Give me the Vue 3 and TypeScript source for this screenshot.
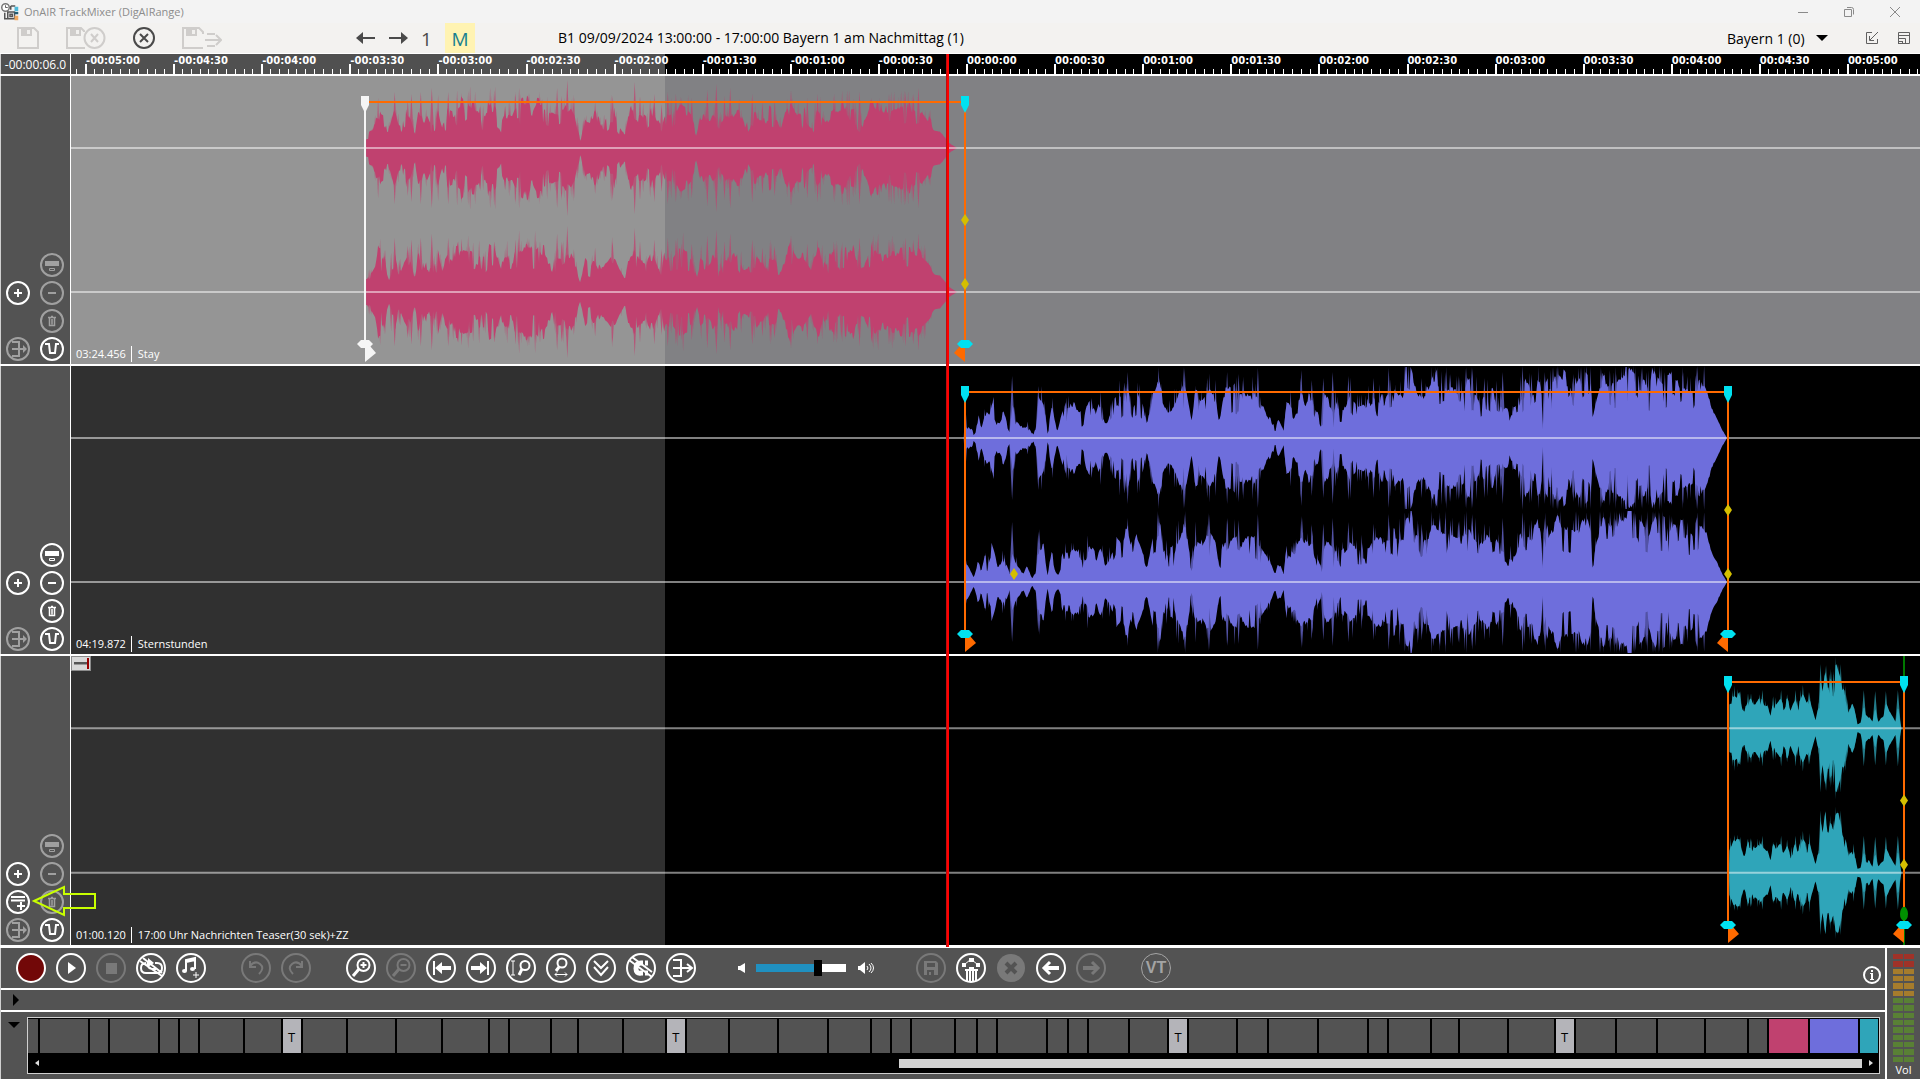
<script setup lang="ts">
type Point = [number, number]

interface Marker {
  x: number
  pin: string
  line: string
  flag: string
  dir: 1 | -1
}

interface Lane {
  id: string
  length: string
  title: string
  theme: string
  color: string
  start: number
  end: number
  markers: Marker[]
  diamonds: Point[]
  body: string[]
  spikes: string
  insert: boolean
  active: string[]
  cue?: number
}

const CENTERS = [72, 216]
const CYAN = '#00e1f0'
const ORANGE = '#ff6a00'

function random(seed: number): () => number {
  let s = seed
  return () => {
    s = (s * 16807) % 2147483647
    return s / 2147483647
  }
}

function pairs(text: string): Point[] {
  return text.trim().split(/\s+/).map((p) => p.split(':').map(Number) as Point)
}

function levelAt(points: Point[], x: number): number {
  for (let i = 1; i < points.length; i++) {
    if (x <= points[i][0]) {
      const [x0, y0] = points[i - 1]
      const [x1, y1] = points[i]
      return y0 + ((y1 - y0) * (x - x0)) / (x1 - x0)
    }
  }
  return 0
}

function drawWave(offset: number, perPixel: number, bodyText: string, spikeText: string, rough: number, seed: number) {
  const body = pairs(bodyText)
  const peaks = pairs(spikeText)
  const first = body[0][0]
  const last = body[body.length - 1][0]
  const fadeOut = last - perPixel * 26
  const bodyPaths: string[] = []
  let spikes = ''
  CENTERS.forEach((cy, channel) => {
    const rnd = random(seed + channel * 977)
    const levels: Point[] = []
    let hold = 0
    let factor = 1
    for (let s = first; s <= last; s += perPixel) {
      // Short runs of raised or lowered level give the outline its teeth.
      if (hold <= 0) {
        const pick = rnd()
        hold = 1 + Math.floor(rnd() * 3)
        factor = pick < 0.3 ? 1 - rnd() * rough * 1.3 : pick > 0.72 ? 1 + rnd() * rough * 0.7 : 1
      }
      hold -= 1
      const base = levelAt(body, s)
      const gain = s > fadeOut ? 1 : factor
      const level = base * gain * (1 - rnd() * rough * 0.2)
      const x = offset + s / perPixel
      levels.push([x, Math.min(71, Math.max(0, level))])
      if (rnd() > 0.8 && base > 14 && s < fadeOut) {
        const h = Math.min(71, base * (1.08 + rnd() * rough * 1.2))
        spikes += `M${(x - 2).toFixed(1)} ${cy}L${x.toFixed(1)} ${(cy - h).toFixed(1)}L${(x + 2).toFixed(1)} ${cy}L${x.toFixed(1)} ${(cy + h).toFixed(1)}Z`
      }
    }
    const top = levels.map(([x, l]) => `${x.toFixed(1)} ${(cy - l).toFixed(1)}`)
    const bottom = levels.map(([x, l]) => `${x.toFixed(1)} ${(cy + l).toFixed(1)}`).reverse()
    bodyPaths.push(`M${top.join('L')}L${bottom.join('L')}Z`)
    peaks.forEach(([s, l]) => {
      const x = offset + s / perPixel
      const h = Math.min(72, l * (channel ? 0.97 : 1))
      spikes += `M${(x - 3).toFixed(1)} ${cy}L${x.toFixed(1)} ${(cy - h).toFixed(1)}L${(x + 3).toFixed(1)} ${cy}L${x.toFixed(1)} ${(cy + h).toFixed(1)}Z`
    })
  })
  return { body: bodyPaths, spikes }
}

const stay = drawWave(269, 2.45,
  '64:14 78:17 85:22 92:40 110:32 117:12 125:28 134:40 142:25 150:22 158:32 166:36 175:28 183:14 192:35 205:24 213:33 222:26 232:27 240:38 250:22 265:36 275:32 290:42 305:42 318:42 335:38 344:36 347:15 350:30 365:42 380:42 395:24 405:36 420:32 430:42 445:42 457:50 470:40 480:45 490:46 505:38 520:36 535:34 552:36 565:40 575:34 588:10 600:30 612:26 625:35 640:24 655:32 668:38 680:28 698:13 706:32 722:40 735:34 750:28 765:40 778:26 788:16 795:36 810:34 830:42 845:44 860:34 875:15 885:34 905:28 915:34 930:24 945:34 958:30 975:40 992:20 1005:34 1025:30 1045:25 1052:36 1065:30 1080:20 1090:36 1105:46 1120:34 1135:36 1155:22 1170:40 1190:26 1205:36 1225:38 1240:42 1260:38 1280:22 1300:44 1320:40 1340:36 1360:40 1380:42 1400:40 1425:36 1445:28 1455:18 1470:17 1480:12 1490:6 1500:3 1512:0',
  '134:56 166:48 175:54 198:56 225:60 265:56 298:55 318:48 380:48 430:54 457:52 463:55 490:52 532:60 543:52 557:68 573:44 625:46 668:52 722:66 735:52 770:54 788:44 803:56 823:54 837:50 862:50 900:58 922:64 942:52 956:60 1010:54 1035:46 1065:48 1105:58 1145:50 1170:54 1210:52 1228:48 1273:56 1303:50 1345:54 1357:52 1385:56 1405:54 1417:60',
  0.34, 4211)

const sternstunden = drawWave(859, 1.912,
  '68:22 75:14 84:5 92:20 98:10 105:24 112:20 120:38 130:14 140:26 152:8 157:30 165:18 178:8 185:16 195:4 203:10 207:38 217:34 225:6 233:34 243:6 255:32 265:30 275:34 290:22 305:38 318:22 325:34 335:16 345:26 356:46 366:40 378:50 388:30 397:44 405:34 415:14 425:44 437:56 445:36 455:26 465:30 475:42 485:56 492:44 500:18 508:44 520:38 535:50 545:44 553:14 560:38 570:44 580:46 590:46 605:44 615:46 625:40 640:30 660:8 666:20 676:8 682:38 695:30 710:46 720:36 730:40 748:14 756:44 766:38 770:36 772:10 774:34 785:26 795:32 803:42 815:34 830:30 845:40 860:36 875:44 890:46 905:42 910:68 918:66 925:50 940:38 955:52 962:60 975:52 990:50 1005:46 1020:48 1035:50 1050:38 1065:44 1080:40 1105:26 1120:28 1135:52 1150:42 1162:54 1169:48 1171:12 1174:46 1190:56 1200:70 1215:54 1230:52 1245:60 1255:70 1264:54 1267:20 1275:42 1285:58 1300:54 1320:60 1340:72 1360:62 1375:48 1385:68 1400:56 1420:54 1440:52 1460:46 1470:60 1485:50 1495:30 1505:20 1515:8 1524:0',
  '157:62 207:52 378:66 437:70 487:70 530:60 568:66 590:64 627:70 710:68 730:58 752:60 770:66 800:62 848:60 877:70 908:72 915:72 940:60 962:66 985:66 995:64 1010:62 1037:70 1060:60 1095:66 1133:72 1150:64 1175:66 1200:72 1230:64 1240:70 1255:72 1283:64 1290:66 1300:68 1312:64 1322:66 1335:72 1345:72 1360:70 1370:66 1385:72 1395:72 1405:66 1417:68 1440:66 1448:62 1467:72 1480:72',
  0.36, 9137)

const nachrichten = drawWave(1609, 2.987,
  '148:26 155:28 162:34 170:30 178:34 185:20 192:16 203:28 212:30 220:24 228:26 238:30 248:26 260:22 270:12 278:26 288:24 300:30 310:20 320:28 330:18 345:30 352:22 367:36 378:26 387:30 395:20 405:8 412:20 417:20 420:52 426:36 434:60 442:38 450:52 458:42 465:60 472:60 480:50 487:36 495:32 503:18 515:22 520:22 530:4 540:5 549:22 555:14 568:10 575:6 583:20 592:6 600:10 608:12 615:26 625:18 635:12 645:6 651:24 658:6 662:0',
  '162:38 172:39 180:37 203:35 212:35 238:34 246:38 278:32 302:38 320:34 345:38 367:43 387:36 420:64 434:62 447:54 458:54 470:64 480:64 549:38 583:37 615:37 651:38',
  0.2, 371)

const lanes: Lane[] = [
  {
    id: 'stay', length: '03:24.456', title: 'Stay', theme: 'past', color: '#c0416f', start: 294, end: 894,
    markers: [
      { x: 294, pin: '#f5f5f5', line: '#f5f5f5', flag: '#f5f5f5', dir: 1 },
      { x: 894, pin: CYAN, line: ORANGE, flag: ORANGE, dir: -1 },
    ],
    diamonds: [[894, 144], [894, 208]], ...stay, insert: false, active: ['plus', 'fade'],
  },
  {
    id: 'sternstunden', length: '04:19.872', title: 'Sternstunden', theme: 'next', color: '#6e6edc', start: 894, end: 1657,
    markers: [
      { x: 894, pin: CYAN, line: ORANGE, flag: ORANGE, dir: 1 },
      { x: 1657, pin: CYAN, line: ORANGE, flag: ORANGE, dir: -1 },
    ],
    diamonds: [[943, 208], [1657, 144], [1657, 208]], ...sternstunden, insert: false,
    active: ['plus', 'fade', 'panel', 'minus', 'trash'],
  },
  {
    id: 'nachrichten', length: '01:00.120', title: '17:00 Uhr Nachrichten Teaser(30 sek)+ZZ', theme: 'next', color: '#2fa5b9', start: 1657, end: 1833,
    markers: [
      { x: 1657, pin: CYAN, line: ORANGE, flag: ORANGE, dir: 1 },
      { x: 1833, pin: CYAN, line: ORANGE, flag: ORANGE, dir: -1 },
    ],
    diamonds: [[1833, 144], [1833, 208]], ...nachrichten, insert: true, active: ['plus', 'fade', 'insert'], cue: 1833,
  },
]

const sideButtons = ['', 'panel', 'plus', 'minus', 'insert', 'trash', 'merge', 'fade']
const sideLabels: Record<string, string> = {
  panel: 'Show panel', plus: 'Add track', minus: 'Remove track', insert: 'Insert element',
  trash: 'Delete', merge: 'Merge', fade: 'Fade curve',
}

function sideIcons(lane: Lane): string[] {
  return sideButtons.map((b) => (b === 'insert' && !lane.insert ? '' : b))
}

const rulerLabels: string[] = []
for (let s = -300; s <= 300; s += 30) {
  const a = Math.abs(s)
  const mm = String(Math.floor(a / 60)).padStart(2, '0')
  const ss = String(a % 60).padStart(2, '0')
  rulerLabels.push(`${s < 0 ? '-' : ''}00:${mm}:${ss}`)
}

let minorTicks = ''
let majorTicks = ''
for (let i = -1; i <= 208; i++) {
  const x = Math.round(15 + i * 8.81)
  if (i % 10 === 0) majorTicks += `M${x - 1} 10h2v10h-2z`
  else minorTicks += `M${x - 1} 15h1v5h-1z`
}

interface Tool { icon: string; label: string; off?: boolean }
const toolGroups: Tool[][] = [
  [
    { icon: 'record', label: 'Record' }, { icon: 'play', label: 'Play' }, { icon: 'stop', label: 'Stop', off: true },
    { icon: 'loop', label: 'Loop off' }, { icon: 'note', label: 'Add music' },
  ],
  [{ icon: 'undo', label: 'Undo', off: true }, { icon: 'redo', label: 'Redo', off: true }],
  [
    { icon: 'zoomin', label: 'Zoom in' }, { icon: 'zoomout', label: 'Zoom out', off: true },
    { icon: 'tostart', label: 'Go to start' }, { icon: 'toend', label: 'Go to end' },
    { icon: 'zoomheight', label: 'Zoom height' }, { icon: 'zoomwidth', label: 'Zoom width' },
    { icon: 'chevrons', label: 'Collapse' }, { icon: 'magnet', label: 'Snap off' }, { icon: 'merge', label: 'Merge' },
  ],
]
const editTools: Tool[] = [
  { icon: 'disk', label: 'Save', off: true }, { icon: 'clear', label: 'Clear mix' },
  { icon: 'cancel', label: 'Cancel', off: true }, { icon: 'back', label: 'Previous' },
  { icon: 'forward', label: 'Next', off: true },
]

const widths = '10 48 18 48 18 18 43 36 T 44 47 44 45 18 40 25 43 41 T 41 47 48 41 18 18 42 21 18 48 19 18 39 37 T 47 29 48 48 18 41 26 47 45 T 40 39 46 41 18'
const blocks = widths.split(' ').map((w) => ({ width: w === 'T' ? 18 : Number(w), text: w === 'T' ? 'T' : '', kind: w === 'T' ? 'talk' : '' }))
blocks.push({ width: 39, text: '', kind: 'pink' }, { width: 48, text: '', kind: 'blue' }, { width: 18, text: '', kind: 'teal' })

const meterRows = Array.from({ length: 15 }, (_, i) => (i < 2 ? 'hot' : i < 6 ? 'warm' : 'ok'))
</script>

<template>
  <div class="app">
    <header class="titlebar">
      <svg class="logo" viewBox="0 0 24 24" width="18" height="18" aria-hidden="true">
        <circle cx="6" cy="6" r="5" fill="#fff" stroke="#777" stroke-width="2" />
        <path d="M6 3v3h3" fill="none" stroke="#333" />
        <path d="M13 4h6M13 4v5M5 13v8h3M9 12h9v9h-9zM12 15h3v3h-3z" fill="none" stroke="#555" stroke-width="2" />
        <path d="M18 5h5v6h-5z" fill="#4fb9d8" /><path d="M18 12h5v3h-5z" fill="#245b70" /><path d="M18 17h5v6h-5z" fill="#f0a860" />
      </svg>
      <span class="app-name">OnAIR TrackMixer (DigAIRange)</span>
      <div class="window-buttons">
        <button type="button" aria-label="Minimise"><svg viewBox="0 0 12 12" width="12" height="12"><path d="M1 6.5h10" /></svg></button>
        <button type="button" aria-label="Restore"><svg viewBox="0 0 12 12" width="12" height="12"><path d="M1.500 3.500h7v7h-7zM4 1.500h4.500q2 0 2 2v5" /></svg></button>
        <button type="button" aria-label="Close"><svg viewBox="0 0 12 12" width="12" height="12"><path d="M1 1l10 10M11 1L1 11" /></svg></button>
      </div>
    </header>

    <nav class="menubar">
      <div class="file-tools">
        <button type="button" aria-label="Save" disabled>
          <svg viewBox="0 0 22 22" width="22" height="22"><path class="pale" d="M1 1h16l4 4v16H1z" /><path class="pale-fill" d="M4 1h11v8H4z" /><path d="M10 3h3v4h-3z" fill="#f1f0ee" /></svg>
        </button>
        <button type="button" aria-label="Save and close" disabled>
          <svg viewBox="0 0 40 22" width="40" height="22"><path class="pale" d="M18 5V4l-3-3H1v20h18" /><path class="pale-fill" d="M4 1h11v8H4z" /><path d="M10 3h3v4h-3z" fill="#f1f0ee" /><circle class="pale" cx="28.500" cy="11" r="10" /><path class="pale" d="M25 7l7 8M32 7l-7 8" /></svg>
        </button>
        <button type="button" aria-label="Close">
          <svg viewBox="0 0 22 22" width="22" height="22"><circle class="dark" cx="11" cy="11" r="10" /><path class="dark" d="M7 7l8 8M15 7l-8 8" /></svg>
        </button>
        <button type="button" aria-label="Save and export" disabled>
          <svg viewBox="0 0 40 22" width="40" height="22"><path class="pale" d="M21 7V5l-4-4H1v20h20" /><path class="pale-fill" d="M4 1h11v8H4z" /><path d="M10 3h3v4h-3z" fill="#f1f0ee" /><path class="pale" d="M25 7h8M23 13h15M25 19h8M34 8l5 5-5 5" /></svg>
        </button>
      </div>
      <div class="step-tools">
        <button type="button" aria-label="Previous"><svg viewBox="0 0 20 14" width="20" height="14"><path class="dark" d="M1 7h18" /><path d="M7 1L0 7l7 6z" fill="#4a4a4a" /></svg></button>
        <button type="button" aria-label="Next"><svg viewBox="0 0 20 14" width="20" height="14"><path class="dark" d="M1 7h18" /><path d="M13 1l7 6-7 6z" fill="#4a4a4a" /></svg></button>
        <button type="button" class="mode">1</button>
        <button type="button" class="mode marked">M</button>
      </div>
      <h1>B1 09/09/2024 13:00:00 - 17:00:00 Bayern 1 am Nachmittag (1)</h1>
      <div class="station">
        <select aria-label="Station"><option>Bayern 1 (0)</option></select>
        <svg viewBox="0 0 12 8" width="12" height="8" aria-hidden="true"><path d="M0 1h12l-6 6z" fill="#000" /></svg>
      </div>
      <div class="view-tools">
        <button type="button" aria-label="Dock"><svg viewBox="0 0 14 14" width="14" height="14"><path class="thin" d="M7 1.500H1.500v11h11V8M13 1L5 9M4.500 5v4.500H9" /></svg></button>
        <button type="button" aria-label="Window size"><svg viewBox="0 0 14 14" width="14" height="14"><path class="thin" d="M1.500 13V1.500h11v11h-11M1 4.500h12M1.500 7.500h7v5M5.500 10.500h-4M5.500 10v3" /></svg></button>
      </div>
    </nav>

    <main class="timeline">
      <div class="ruler">
        <div class="position">-00:00:06.0</div>
        <div class="scale">
          <svg viewBox="0 0 1849 20" preserveAspectRatio="none" aria-hidden="true"><path :d="minorTicks" fill="#fff" /><path :d="majorTicks" fill="#fff" /></svg>
          <div class="labels"><span v-for="l in rulerLabels" :key="l">{{ l }}</span></div>
        </div>
      </div>

      <section v-for="lane in lanes" :key="lane.id" class="lane" :class="lane.theme">
        <div class="side">
          <div class="side-grid">
            <template v-for="(icon, i) in sideIcons(lane)" :key="i">
              <span v-if="!icon"></span>
              <button v-else type="button" :aria-label="sideLabels[icon]" :disabled="!lane.active.includes(icon)">
                <svg viewBox="0 0 24 24" width="24" height="24">
                  <circle cx="12" cy="12" r="11" />
                  <template v-if="icon === 'panel'"><path class="solid" d="M5 8h14v5H5z" /><path d="M9.500 15.500h5v2h-5z" class="fine" /></template>
                  <path v-else-if="icon === 'plus'" d="M8 12h8M12 8v8" />
                  <path v-else-if="icon === 'minus'" d="M8 12h8" />
                  <g v-else-if="icon === 'trash'" class="fine"><path d="M8 8.500h8M11 7.500h2M9.500 9v7.500h5V9M12 10v5.500" stroke-width="1.500" /></g>
                  <path v-else-if="icon === 'insert'" d="M5 7h14M5 10.500h14M15 12v8M11 16h8" />
                  <g v-else-if="icon === 'merge'"><path d="M6 5h7v14H6M6 12h12" /><path class="solid" d="M17 8l4 4-4 4z" /></g>
                  <path v-else d="M5 7h4l1 9h5l1-9h3" />
                </svg>
              </button>
            </template>
          </div>
        </div>
        <div class="wave">
          <svg viewBox="0 0 1849 288" preserveAspectRatio="none" aria-hidden="true">
            <path :d="lane.spikes" :fill="lane.color" opacity="0.75" />
            <path v-for="(d, i) in lane.body" :key="i" :d="d" :fill="lane.color" />
            <path d="M0 72h1849M0 216h1849" stroke="#fff" stroke-width="2" opacity="0.5" />
            <path v-if="lane.cue" :d="`M${lane.cue} 0v288`" stroke="#007800" stroke-width="2" />
            <path :d="`M${lane.start} 26H${lane.end}`" :stroke="ORANGE" stroke-width="2" />
            <g v-for="m in lane.markers" :key="m.x">
              <path :d="`M${m.x} 24v244`" :stroke="m.line" stroke-width="2" />
              <path :d="`M${m.x - 4} 20h8v9l-4 8l-4 -8z`" :fill="m.pin" />
              <path :d="`M${m.x} 270v16l${m.dir * 11} -9l${m.dir * -6} -7z`" :fill="m.flag" />
              <path :d="`M${m.x - 8} 268l4 -4h8l4 4l-4 4h-8z`" :fill="m.pin" />
            </g>
            <path v-for="[x, y] in lane.diamonds" :key="`${x}-${y}`" :d="`M${x} ${y - 6}l4 6l-4 6l-4 -6z`" fill="#d4bf00" />
            <ellipse v-if="lane.cue" :cx="lane.cue" cy="257" rx="4" ry="7" fill="#009000" />
          </svg>
          <div v-if="lane.insert" class="cue-tag"><i></i><b></b></div>
          <div class="caption"><span>{{ lane.length }}</span><span class="name">{{ lane.title }}</span></div>
        </div>
        <svg v-if="lane.insert" class="pointer" viewBox="0 0 66 32" width="66" height="32" aria-hidden="true">
          <path d="M3 16L33 2v7h31v14H33v7z" fill="none" stroke="#c8ff00" stroke-width="2" />
        </svg>
      </section>
      <div class="playhead-layer"><div class="playhead"></div></div>
    </main>

    <footer class="console">
      <div class="console-main">
        <div class="transport">
          <div v-for="(group, g) in toolGroups" :key="g" class="group">
            <button v-for="t in group" :key="t.icon" type="button" :aria-label="t.label" :disabled="t.off">
              <svg viewBox="0 0 30 30" width="30" height="30">
                <circle cx="15" cy="15" r="14" :fill="t.icon === 'record' ? '#720808' : 'none'" />
                <path v-if="t.icon === 'play'" class="solid" d="M12 9l8 6-8 6z" />
                <path v-else-if="t.icon === 'stop'" class="solid" d="M10 10h11v11H10z" />
                <g v-else-if="t.icon === 'loop'"><path d="M10 10q-5 0-5 5t5 5h11q5 0 5-5t-5-5h-2M12 8q-2 7 4 8h4M4 8l22 15M7 5l19 15" /><path class="solid" d="M12 5l6 5-6 4z" /></g>
                <g v-else-if="t.icon === 'note'"><path d="M10 18V7l9-2v11M10 9l9-2" /><ellipse class="solid" cx="8.500" cy="18" rx="2.500" ry="2" /><ellipse class="solid" cx="16.500" cy="16" rx="2.500" ry="2" /><path d="M17 22h6M20 19v6" class="fine" /></g>
                <path v-else-if="t.icon === 'undo'" d="M9 8v6h6M9 13q5-6 10-2q5 4-1 10" />
                <path v-else-if="t.icon === 'redo'" d="M21 8v6h-6M21 13q-5-6-10-2q-5 4 1 10" />
                <g v-else-if="t.icon === 'zoomin' || t.icon === 'zoomout'"><circle cx="17.500" cy="12" r="6" /><path d="M14.500 12h6" /><path v-if="t.icon === 'zoomin'" d="M17.500 9v6" /><path d="M13 16l-6 7" stroke-width="3" /></g>
                <g v-else-if="t.icon === 'tostart'"><path d="M8 8v14" /><path class="solid" d="M9 15l7-6v4h9v4h-9v4z" /></g>
                <g v-else-if="t.icon === 'toend'"><path d="M22 8v14" /><path class="solid" d="M21 15l-7-6v4H5v4h9v4z" /></g>
                <g v-else-if="t.icon === 'zoomheight'"><path d="M5 8h4M5 22h4M7 8v14" class="fine" /><circle cx="19" cy="12.500" r="4.500" /><path d="M16 16l-3 6" stroke-width="3" /></g>
                <g v-else-if="t.icon === 'zoomwidth'"><circle cx="16" cy="10" r="4.500" /><path d="M13 14l-3 4" stroke-width="3" /><path d="M9 21.500h12M11 19.500l-2 2 2 2M19 19.500l2 2-2 2" class="fine" /></g>
                <path v-else-if="t.icon === 'chevrons'" d="M8 8l7 7 7-7M8 14l7 8 7-8" />
                <g v-else-if="t.icon === 'magnet'"><path d="M17 10h-2q-5 0-5 5.500t5 4.500h2M19 10h3M19 20h3" stroke-width="5" /><path d="M3 7l23 17M6 4l20 15" /></g>
                <g v-else-if="t.icon === 'merge'"><path d="M7 7h8v16H7M7 15h18M21 11l5 4-5 4" /></g>
              </svg>
            </button>
          </div>
          <div class="volume">
            <svg viewBox="0 0 8 10" width="8" height="10" aria-hidden="true"><path d="M0 3h2l5-3v10l-5-3H0z" fill="#fff" /></svg>
            <input type="range" min="0" max="100" value="71" aria-label="Volume" />
            <svg viewBox="0 0 18 12" width="18" height="12" aria-hidden="true"><path d="M2 4h2l5-4v12L4 8H2z" fill="#fff" /><path d="M11 4q2 2 0 4M13 2q4 4 0 8M15 1q5 5 0 10" fill="none" stroke="#fff" /></svg>
          </div>
          <div class="group edit">
            <button v-for="t in editTools" :key="t.icon" type="button" :aria-label="t.label" :disabled="t.off">
              <svg viewBox="0 0 30 30" width="30" height="30">
                <circle cx="15" cy="15" r="14" :class="{ solid: t.icon === 'cancel' }" />
                <g v-if="t.icon === 'disk'"><path class="solid" fill-rule="evenodd" d="M8 8h12l2 2v12H8zM11 10v4h8v-4zM11 17v5h7v-5z" /><path class="solid" d="M13 19h2v3h-2z" /></g>
                <g v-else-if="t.icon === 'clear'"><path class="solid" d="M13 5h5v4h-5zM6 10h4v4H6zM20 10h4v4h-4zM9 16h13v2H9zM13 14h5v2h-5z" /><path d="M9 11l5-4M21 11l-5-4" class="fine" /><path d="M11 18v10M14 18v11M17 18v11M20 18v10" /></g>
                <path v-else-if="t.icon === 'cancel'" class="cut" d="M10 10l10 10M20 10L10 20" />
                <g v-else-if="t.icon === 'back'"><path d="M8 15h15" stroke-width="4" /><path d="M14 9l-6 6 6 6" stroke-width="3" /></g>
                <g v-else><path d="M7 15h15" stroke-width="4" /><path d="M16 9l6 6-6 6" stroke-width="3" /></g>
              </svg>
            </button>
          </div>
          <button type="button" class="vt">VT</button>
          <button type="button" class="info" aria-label="Information">
            <svg viewBox="0 0 18 18" width="18" height="18"><circle cx="9" cy="9" r="8" /><path class="solid" d="M8 4h2v2H8zM7 7h3v6h1v1H7v-1h1V8H7z" /></svg>
          </button>
        </div>
        <div class="drawer">
          <button type="button" aria-label="Expand"><svg viewBox="0 0 10 12" width="10" height="12"><path d="M2 0l6 6-6 6z" fill="#000" /></svg></button>
        </div>
        <div class="overview">
          <button type="button" aria-label="Collapse overview"><svg viewBox="0 0 12 8" width="12" height="8"><path d="M0 1h12L6 7z" fill="#000" /></svg></button>
          <div class="map">
            <div class="blocks">
              <div v-for="(b, i) in blocks" :key="i" :class="b.kind" :style="{ flexGrow: b.width }">{{ b.text }}</div>
            </div>
            <div class="scrollbar">
              <button type="button" aria-label="Scroll left"><svg viewBox="0 0 4 6" width="4" height="6"><path d="M4 0v6L0 3z" fill="#ddd" /></svg></button>
              <div class="track"><div class="thumb"></div></div>
              <button type="button" aria-label="Scroll right"><svg viewBox="0 0 4 6" width="4" height="6"><path d="M0 0v6l4-3z" fill="#ddd" /></svg></button>
            </div>
          </div>
        </div>
      </div>
      <aside class="meter">
        <div class="bars"><template v-for="(m, i) in meterRows" :key="i"><i :class="m"></i><i :class="m"></i></template></div>
        <span>Vol</span>
      </aside>
    </footer>
  </div>
</template>

<style>
body { margin: 0; background: #fff; }
</style>

<style scoped>
* { box-sizing: border-box; }
.app {
  min-height: 100vh;
  display: flex;
  flex-direction: column;
  font-family: "Open Sans", "Noto Sans", sans-serif;
  font-size: 11px;
  color: #fff;
  overflow: hidden;
  padding-bottom: 1px;
}
button { margin: 0; padding: 0; border: 0; background: none; font: inherit; color: inherit; display: block; }
button svg { display: block; }

.titlebar { height: 23px; background: #f3f3f3; display: flex; align-items: center; padding: 0 2px 0 1px; color: #8c8c8c; }
.app-name { margin-left: 5px; font-size: 11px; }
.window-buttons { margin-left: auto; display: flex; }
.window-buttons button { width: 46px; height: 22px; display: grid; place-items: center; }
.window-buttons path { fill: none; stroke: #8a8a8a; }

.menubar { height: 30px; background: #f3f2f0; display: flex; align-items: center; color: #000; }
.file-tools { display: flex; gap: 27px; padding-left: 17px; width: 354px; }
.file-tools svg { fill: none; stroke-width: 2; }
.pale { stroke: #cfcdcb; stroke-width: 2; fill: none; }
circle.pale { fill: #f3f2f0; }
.pale-fill { fill: #cfcdcb; }
.dark { stroke: #4a4a4a; stroke-width: 2; fill: none; }
.thin { fill: none; stroke: #606060; stroke-width: 1; }
.step-tools { display: flex; align-items: center; gap: 12px; width: 204px; padding-left: 2px; }
.mode { width: 13px; height: 30px; font-size: 19px; line-height: 32px; text-align: center; color: #4a4a4a; }
.marked { width: 30px; background: #fff3b2; color: #17808f; }
h1 { margin: 0; font-size: 14px; font-weight: 400; line-height: 20px; white-space: nowrap; }
.station { margin-left: auto; display: flex; align-items: center; gap: 11px; }
select { appearance: none; border: 0; background: none; padding: 0; margin: 0; font: inherit; font-size: 14px; color: #000; }
.view-tools { display: flex; gap: 18px; padding: 0 9px 0 37px; }

.timeline { position: relative; flex: 1 0 auto; display: flex; flex-direction: column; border-top: 1px solid #fff; border-bottom: 1px solid #fff; }
.ruler { display: flex; height: 22px; border-bottom: 2px solid #fff; }
.position { width: 71px; background: #505050; border-left: 1px solid #d0d0d0; border-right: 1px solid #fff; text-align: center; font-size: 12px; line-height: 22px; white-space: nowrap; }
.scale { flex: 1; position: relative; background: linear-gradient(90deg, #505050 32.13%, #000 32.13%); overflow: hidden; }
.scale svg { position: absolute; inset: 0; width: 100%; height: 100%; }
.labels { display: flex; margin-left: 15px; width: 100%; position: relative; }
.labels span { flex: 0 0 4.765%; font-family: "DejaVu Sans", sans-serif; font-size: 10px; font-weight: 700; line-height: 14px; white-space: nowrap; }

.lane { position: relative; display: flex; flex: 1 0 290px; border-bottom: 2px solid #fff; }
.lane:last-of-type { flex-basis: 291px; }
.side { width: 71px; background: #535353; border-left: 1px solid #d0d0d0; border-right: 1px solid #fff; display: flex; align-items: flex-end; padding: 0 5px 3px; }
.side-grid { display: grid; grid-template-columns: 24px 24px; grid-auto-rows: 24px; gap: 4px 10px; }
.side svg, .transport button svg { fill: none; stroke: #fff; stroke-width: 2; }
.side .solid, .transport .solid { fill: #fff; stroke: none; }
.side .fine, .transport .fine { stroke-width: 1; }
.transport .cut { stroke: #535353; stroke-width: 4; }
.side button:disabled { opacity: 0.45; }
.wave { flex: 1; position: relative; }
.past .wave { background: linear-gradient(90deg, #959595 32.13%, #818184 32.13%); }
.next .wave { background: linear-gradient(90deg, #303030 32.13%, #000 32.13%); }
.wave > svg { position: absolute; inset: 0; width: 100%; height: 100%; }
.caption { position: absolute; left: 5px; bottom: 2px; display: flex; line-height: 16px; }
.name { margin-left: 5px; padding-left: 6px; border-left: 1px solid #fff; }
.cue-tag { position: absolute; left: 0; top: 0; width: 20px; height: 15px; background: #d8d8d8; border: 1px solid #8a8a8a; display: flex; align-items: center; justify-content: flex-end; padding-right: 1px; }
.cue-tag i { width: 13px; height: 3px; background: #555; border-bottom: 1px solid #999; }
.cue-tag b { width: 2px; height: 11px; background: #900; }
.pointer { position: absolute; left: 31px; bottom: 28px; }
.playhead-layer { position: absolute; inset: 0 0 0 71px; pointer-events: none; }
.playhead { position: absolute; left: 47.32%; top: 0; bottom: 0; width: 3px; background: #f00; border-left: 1px solid #b81010; }

.console { display: flex; border-left: 1px solid #d0d0d0; }
.console-main { flex: 1; min-width: 0; border-right: 2px solid #fff; }
.transport { height: 42px; background: #535353; border-bottom: 2px solid #fff; display: flex; align-items: center; padding-left: 15px; padding-right: 4px; }
.group { display: flex; gap: 10px; margin-right: 35px; }
.transport button:disabled { opacity: 0.22; }
.volume { display: flex; align-items: center; margin-left: 7px; width: 178px; gap: 10px; }
input[type="range"] { appearance: none; width: 90px; height: 16px; margin: 0; background: linear-gradient(90deg, #2090c0 66%, #fff 66%) center / 100% 8px no-repeat; }
input[type="range"]::-webkit-slider-thumb { appearance: none; width: 8px; height: 16px; background: #000; border: 0; border-radius: 0; }
.vt { width: 30px; height: 30px; border: 1px solid #a4a4a4; border-radius: 50%; color: #a4a4a4; font-family: "Liberation Sans", sans-serif; font-weight: 700; font-size: 16px; line-height: 28px; text-align: center; }
.info { margin-left: auto; margin-top: 14px; }
.drawer { height: 22px; background: #535353; border-bottom: 2px solid #fff; display: flex; align-items: center; padding-left: 10px; }
.overview { height: 67px; background: #535353; display: flex; align-items: flex-start; padding: 5px 5px 0 7px; }
.overview > button { padding-top: 4px; width: 19px; }
.map { flex: 1; min-width: 0; height: 57px; background: #000; border: 1px solid #d0d0d0; padding-top: 1px; }
.blocks { display: flex; gap: 2px; height: 34px; padding-right: 1px; }
.blocks > div { flex: 1 1 0; min-width: 0; background: #535353; color: #000; font-size: 13px; line-height: 36px; text-align: center; }
.blocks > .talk { background: #b4b4b9; }
.blocks > .pink { background: #c0416f; }
.blocks > .blue { background: #6e6edc; }
.blocks > .teal { background: #2fa5b9; }
.scrollbar { display: flex; align-items: center; height: 20px; }
.scrollbar button { width: 17px; display: grid; place-items: center; }
.track { flex: 1; height: 9px; }
.thumb { margin-left: 47%; width: 53%; height: 9px; background: #d3d3d3; }
.meter { width: 33px; background: #535353; padding-top: 6px; text-align: center; }
.bars { display: grid; grid-template-columns: 10px 10px; gap: 2px 1px; height: 108px; justify-content: center; grid-auto-rows: 1fr; }
.bars i { display: block; background: #598035; }
.bars .hot { background: #a03228; }
.bars .warm { background: #a67c2c; }
.meter span { display: block; line-height: 16px; font-size: 11px; }
</style>
